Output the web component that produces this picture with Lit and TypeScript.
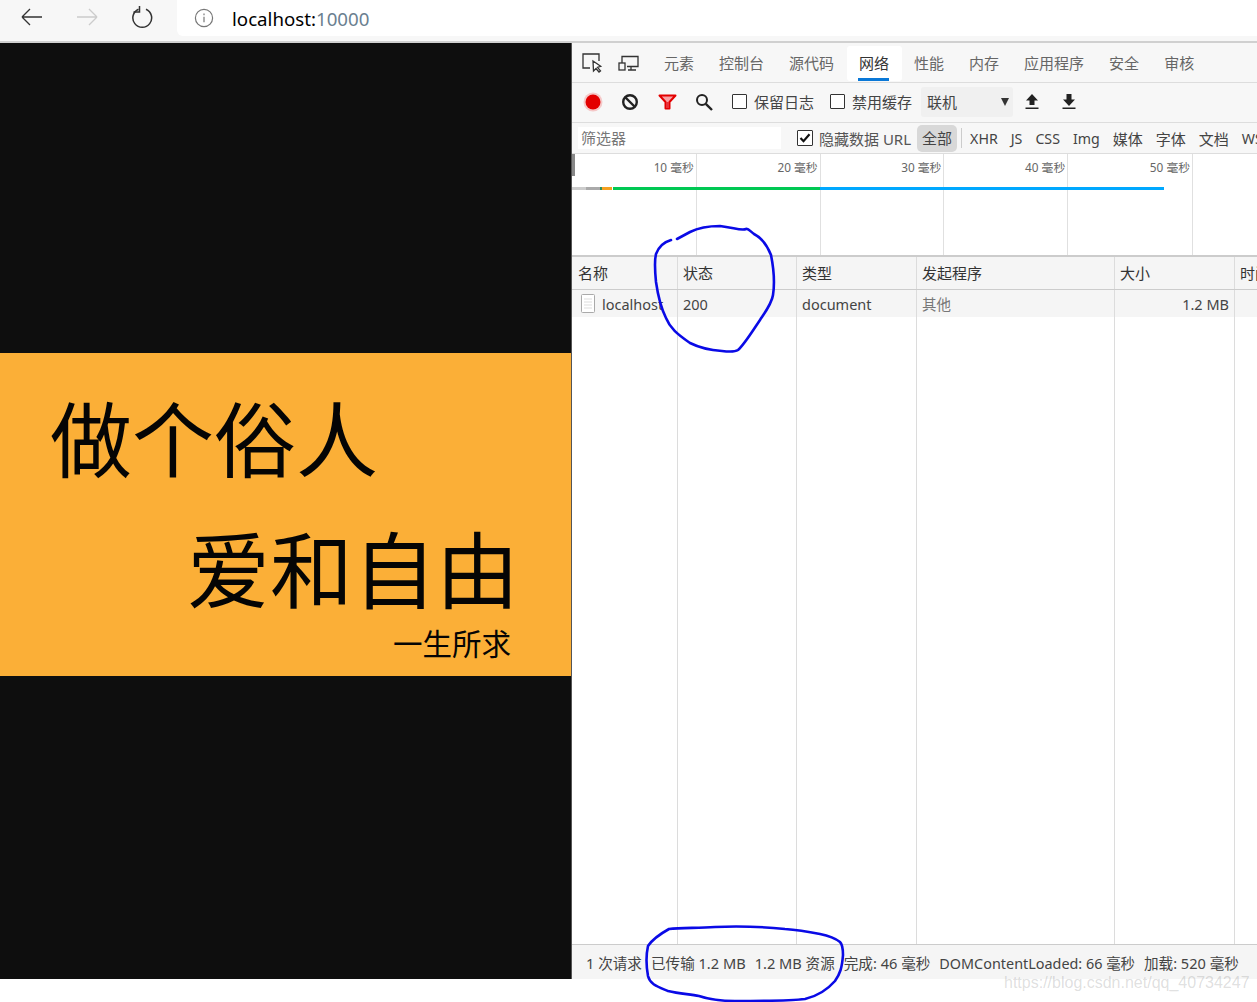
import { LitElement, html, css, svg } from "lit";
import { customElement } from "lit/decorators.js";

const tabs = ["元素", "控制台", "源代码", "网络", "性能", "内存", "应用程序", "安全", "审核"];
const types = ["XHR", "JS", "CSS", "Img", "媒体", "字体", "文档", "WS"];
const ticks = ["10 毫秒", "20 毫秒", "30 毫秒", "40 毫秒", "50 毫秒"];
const segs: [number, string][] = [[14, "#cccccc"], [14, "#aaaaaa"], [2, "#2f8f5f"], [10, "#f5a020"], [1, "#ffffff"], [207, "#00c853"], [344, "#00a8ff"]];

@customElement("app-root")
export class AppRoot extends LitElement {
  static styles = css`
    :host { display: block; position: relative; width: 1257px; height: 1002px; overflow: hidden; background: #fff;
      font-family: "Noto Sans", "Noto Sans CJK SC", sans-serif; font-size: 14px; color: #333; }
    .top { height: 41px; background: #f7f7f7; border-bottom: 2px solid #d0d0d0; display: flex; align-items: flex-start; }
    .nav { display: flex; align-items: center; height: 34px; padding-left: 21px; gap: 33px; width: 156px; }
    .nav svg { display: block; flex: none; }
    .url { flex: 1; height: 36px; background: #fff; border-radius: 0 0 0 6px; display: flex; align-items: center; padding-left: 17px; gap: 18px; font-size: 18.7px; color: #000; }
    .url span span { color: #6b7f90; }
    .main { display: flex; height: 936px; }
    .page { width: 571px; background: #0e0e0e; padding-top: 310px; box-sizing: border-box; }
    .band { height: 323px; background: #fbaf37; color: #050505; box-sizing: border-box; padding: 0 60px 0 50px; display: flex; flex-direction: column; font-family: "Noto Sans CJK SC", sans-serif; }
    .l1 { font-size: 82px; line-height: 90px; margin-top: 38px; }
    .l2 { font-size: 83px; line-height: 90px; margin-top: 40px; margin-right: -8px; text-align: right; }
    .l3 { font-size: 29.5px; line-height: 40px; margin-top: 11px; text-align: right; }
    .dev { width: 686px; flex: none; border-left: 1px solid #555; box-sizing: border-box; display: flex; flex-direction: column; background: #fff; }
    .tabs { height: 40px; flex: none; background: #f7f7f7; border-bottom: 1px solid #ddd; box-sizing: border-box; display: flex; padding-left: 10px; }
    .tabicons { display: flex; align-items: center; gap: 15px; width: 69.5px; flex: none; }
    .tabicons svg { display: block; }
    .tab { position: relative; padding: 0 12.5px; margin-top: 3px; font-size: 15px; line-height: 34px; color: #666; white-space: nowrap; height: 35px; box-sizing: border-box; }
    .tab.on { background: #fff; color: #333; border-radius: 3px; }
    .tab.on::after { content: ""; position: absolute; left: 11px; right: 13px; bottom: 0; height: 3px; background: #0a78d7; }
    .tools { height: 40px; flex: none; background: #f7f7f7; border-bottom: 1px solid #ddd; box-sizing: border-box; display: flex; align-items: center; padding-left: 11px; font-size: 15px; line-height: 20px; color: #444; }
    .tools > * { position: relative; top: -1px; }
    .tools svg { display: block; flex: none; }
    .i1 { margin-right: 18px; }
    .i2 { margin-right: 19px; }
    .i3 { margin-right: 18px; }
    .i4 { margin-right: 19px; }
    .i { margin-right: 17px; }
    .i.down { margin-left: 6px; }
    .chk { width: 13px; height: 13px; border: 1px solid #333; border-radius: 1px; box-sizing: content-box; margin-right: 7px; flex: none; background: #fff; }
    .cl { margin-right: 16px; white-space: nowrap; }
    .sel { width: 92px; height: 30px; background: #f0f0f0; border-radius: 3px; box-sizing: border-box; display: flex; align-items: center; justify-content: space-between; padding: 0 4px 0 6px; margin-left: -7px; margin-right: 12px; color: #444; }
    .tri { width: 0; height: 0; border-left: 4px solid transparent; border-right: 4px solid transparent; border-top: 8px solid #333; }
    .filter { height: 31px; flex: none; background: #f7f7f7; border-bottom: 1px solid #ddd; box-sizing: border-box; display: flex; align-items: center; font-size: 15px; color: #555; white-space: nowrap; overflow: hidden; }
    .finput { width: 203px; height: 22px; background: #fff; margin-left: 6px; padding-left: 3px; box-sizing: border-box; line-height: 22px; color: #777; margin-right: 16px; flex: none; }
    .hide { width: 14px; height: 14px; border: 1px solid #333; border-radius: 1px; margin-right: 6px; display: flex; flex: none; background: #fff; }
    .all { background: #d8d8d8; border-radius: 5px; padding: 0 5px; height: 27px; line-height: 27px; margin-left: 6px; color: #444; }
    .sep { width: 1px; height: 20px; background: #ccc; margin: 0 8px 0 4px; flex: none; }
    .ty { margin-right: 13px; color: #444; }
    .ty.lat { font-size: 14.2px; }
    .timeline { height: 101px; flex: none; position: relative; display: flex; padding-left: 1px; border-bottom: 2px solid #ccc; box-sizing: content-box; }
    .tick { width: 123.8px; flex: none; border-right: 1px solid #e0e0e0; box-sizing: border-box; text-align: right; padding: 5px 2px 0 0; font-size: 11.8px; line-height: 17px; color: #666; white-space: nowrap; }
    .tick:nth-child(5) { width: 124.8px; }
    .mark { position: absolute; left: 0; top: 0; width: 3px; height: 22px; background: #888; }
    .bar { position: absolute; left: 0; top: 33px; height: 3px; display: flex; }
    .bar i { display: block; height: 3px; }
    .cols { display: grid; grid-template-columns: 106px 119px 120px 198px 120px 1fr; }
    .cols > div { border-right: 1px solid #dcdcdc; box-sizing: border-box; white-space: nowrap; overflow: hidden; padding: 0 5px 0 5px; }
    .cols > div:first-child { padding-left: 6px; }
    .cols > div:last-child { border-right: 0; }
    .head { height: 33px; flex: none; background: #f5f5f5; border-bottom: 1px solid #ccc; box-sizing: border-box; line-height: 33px; font-size: 15px; color: #333; }
    .row { height: 27px; flex: none; background: #f5f5f5; line-height: 28px; font-size: 14.5px; color: #444; }
    .row > div { display: flex; align-items: center; }
    .doc { margin: 0 6px 0 2px; flex: none; }
    .right { justify-content: flex-end; }
    .muted { color: #777; }
    .fill { flex: 1; min-height: 0; }
    .status { height: 35px; flex: none; background: #f5f5f5; border-top: 1px solid #ccc; box-sizing: border-box; display: flex; align-items: center; padding-left: 14px; font-size: 14.6px; color: #444; white-space: nowrap; }
    .status span { margin-right: 9px; }
    .status span.dom { font-size: 14.4px; }
    .ink { position: absolute; left: 0; top: 0; pointer-events: none; }
    .mark-w { position: absolute; left: 1004px; top: 974px; font-family: "Liberation Sans", sans-serif; font-size: 16px; color: rgba(120,120,120,.24); white-space: nowrap; }
  `;

  render() {
    return html`
      <div class="top">
        <div class="nav">
          <svg width="22" height="20" viewBox="0 0 22 20" fill="none" stroke="#333" stroke-width="1.3"><path d="M1 10h20M1 10l8-8M1 10l8 8"/></svg>
          <svg width="22" height="20" viewBox="0 0 22 20" fill="none" stroke="#ccc" stroke-width="1.3"><path d="M1 10h20M21 10l-8-8M21 10l-8 8"/></svg>
          <svg width="22" height="22" viewBox="0 0 22 22" fill="none" stroke="#333" stroke-width="1.5"><path d="M7.500 3.200A9.400 9.400 0 1 0 15 3.200"/><path d="M8.500 0.500v6h-6" transform="translate(0 -.5)"/></svg>
        </div>
        <div class="url">
          <svg width="20" height="20" viewBox="0 0 20 20" fill="none" stroke="#777" stroke-width="1.2"><circle cx="10" cy="10" r="8.600"/><path d="M10 8.800v5.500M10 5.600v1.600"/></svg>
          <span>localhost:<span>10000</span></span>
        </div>
      </div>
      <div class="main">
        <div class="page">
          <div class="band">
            <div class="l1">做个俗人</div>
            <div class="l2">爱和自由</div>
            <div class="l3">一生所求</div>
          </div>
        </div>
        <div class="dev">
          <div class="tabs">
            <div class="tabicons">
              <svg width="21" height="20" viewBox="0 0 21 20" fill="none" stroke="#333" stroke-width="1.3"><path d="M8 15H1V1h16v7"/><path d="M11 8l.5 10 2.500-2.500 3 3.500 1.500-1.200-3-3.500 3.200-1z" fill="#fff"/></svg>
              <svg width="21" height="16" viewBox="0 0 21 16" fill="none" stroke="#333" stroke-width="1.3"><path d="M4 8V1.500h16v10H9M13 11.500V15M10 15h8"/><rect x="1" y="8" width="6" height="7" fill="#f7f7f7"/></svg>
            </div>
            ${tabs.map((t) => html`<div class="tab ${t === "网络" ? "on" : ""}">${t}</div>`)}
          </div>
          <div class="tools">
            <svg class="i1" width="20" height="20" viewBox="0 0 20 20"><circle cx="10" cy="10" r="9.500" fill="#f5c8c8"/><circle cx="10" cy="10" r="7.500" fill="#e30000"/></svg>
            <svg class="i2" width="18" height="18" viewBox="0 0 18 18" fill="none" stroke="#222" stroke-width="2.400"><circle cx="9" cy="9" r="6.800"/><path d="M4 4l10 10"/></svg>
            <svg class="i3" width="19" height="16" viewBox="0 0 19 16"><path d="M1.500 1.500h16l-6 6.500v6.500h-4V8z" fill="#f8a0a4" stroke="#e30000" stroke-width="2" stroke-linejoin="round"/><path d="M8 8h3v6H8z" fill="#e83038"/></svg>
            <svg class="i4" width="18" height="18" viewBox="0 0 18 18" fill="none" stroke="#222" stroke-width="2"><circle cx="7" cy="7" r="5"/><path d="M10.800 10.800L17 17" stroke-width="2.400"/></svg>
            <div class="chk"></div><div class="cl">保留日志</div>
            <div class="chk"></div><div class="cl">禁用缓存</div>
            <div class="sel"><span>联机</span><div class="tri"></div></div>
            <svg class="i" width="14" height="17" viewBox="0 0 14 17" fill="#222"><path d="M7 1l6 6.500H9.500V12h-5V7.500H1zM0.500 14.500h13V16H0.500z"/></svg>
            <svg class="i down" width="14" height="17" viewBox="0 0 14 17" fill="#222"><path d="M7 13l6-6.500H9.500V1h-5v5.500H1zM0.500 14.500h13V16H0.500z"/></svg>
          </div>
          <div class="filter">
            <div class="finput">筛选器</div>
            <div class="hide"><svg width="14" height="14" viewBox="0 0 14 14" fill="none" stroke="#111" stroke-width="2.200"><path d="M2.500 7l3 3.200 6-7"/></svg></div>
            <span>隐藏数据 URL</span>
            <div class="all">全部</div>
            <div class="sep"></div>
            ${types.map((t) => html`<span class="ty ${/[A-Z]/.test(t) ? "lat" : ""}">${t}</span>`)}
          </div>
          <div class="timeline">
            ${ticks.map((t) => html`<div class="tick">${t}</div>`)}
            <div class="mark"></div>
            <div class="bar">${segs.map(([w, c]) => html`<i style="width:${w}px;background:${c}"></i>`)}</div>
          </div>
          <div class="cols head">
            <div>名称</div><div>状态</div><div>类型</div><div>发起程序</div><div>大小</div><div>时间</div>
          </div>
          <div class="cols row">
            <div>
              <svg class="doc" width="16" height="19" viewBox="0 0 16 19" fill="#fff" stroke="#aaa"><rect x="1.500" y=".5" width="13" height="18" rx="1"/><path d="M4 5h8M4 8h8M4 11h8M4 14h8" stroke="#ddd"/></svg>
              localhost
            </div>
            <div>200</div><div>document</div><div class="muted">其他</div><div class="right">1.2 MB</div><div></div>
          </div>
          <div class="cols fill"><div></div><div></div><div></div><div></div><div></div><div></div></div>
          <div class="status">
            <span>1 次请求</span><span>已传输 1.2 MB</span><span>1.2 MB 资源</span><span>完成: 46 毫秒</span><span class="dom">DOMContentLoaded: 66 毫秒</span><span>加载: 520 毫秒</span>
          </div>
        </div>
      </div>
      <svg class="ink" width="1257" height="1002" fill="none" stroke="#0a0ae6" stroke-width="2.600" stroke-linejoin="round" stroke-linecap="round">
        ${svg`<path d="M671 240C664 242 659 246 656 254C654 262 655 272 656 282C658 296 661 308 666 318C670 328 677 334 690 343C698 347 708 350 722 351C730 352 735 352 738 350C744 345 752 332 760 320C766 311 772 303 773 295C775 282 774 270 771 255C767 245 762 238 754 234C750 231 748 228 746 229C742 231 735 228 720 226C708 226 698 228 690 232L677 239"/>
        <path d="M669 929C660 934 652 940 648 946C646 955 646 965 648 976C650 984 656 986 668 991C680 994 690 994 699 996C708 999 716 1001 735 1001C760 1001 790 1001 805 999C818 996 828 989 835 981C840 974 842 968 843 955C843 948 842 944 840 942C835 938 830 936 820 934C810 932 800 930 785 929C765 927 735 926 715 927C695 928 680 928 669 929"/>`}
      </svg>
      <div class="mark-w">https://blog.csdn.net/qq_40734247</div>
    `;
  }
}
